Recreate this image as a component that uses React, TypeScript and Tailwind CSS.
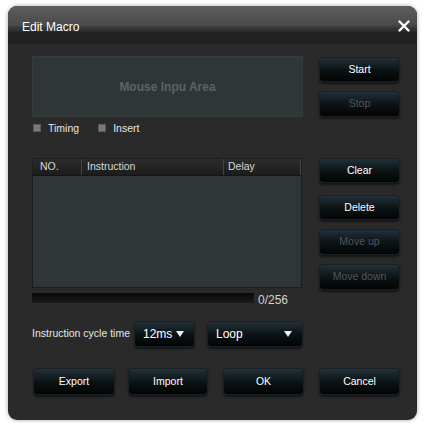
import React from 'react';

const font = { fontFamily: '"Liberation Sans", Arial, sans-serif' };

function Btn({ label, dim, className }: { label: string; dim?: boolean; className?: string }) {
  return (
    <div
      className={`flex items-center justify-center rounded-[4px] border border-[#1a1f21] bg-gradient-to-b from-[#22313a] via-[#0d1416] to-[#030505] text-[10.5px] shadow-[0_2px_2px_rgba(0,0,0,0.5)] ${
        dim ? 'text-[#4d585b]' : 'text-white'
      } ${className ?? ''}`}
    >
      {label}
    </div>
  );
}

function Dropdown({ label, className }: { label: string; className?: string }) {
  return (
    <div
      className={`flex items-center justify-between rounded-[4px] border border-[#1a1f21] bg-gradient-to-b from-[#22313a] via-[#0d1416] to-[#030505] pl-[8px] pr-[10px] shadow-[0_2px_2px_rgba(0,0,0,0.5)] ${className ?? ''}`}
    >
      <span className="text-[12px] text-white">{label}</span>
      <svg width="8" height="6" viewBox="0 0 8 6">
        <path d="M0 0 L8 0 L4 6 Z" fill="#e8eef2" />
      </svg>
    </div>
  );
}

function Check({ label }: { label: string }) {
  return (
    <div className="flex items-center gap-[7px] leading-[12px]">
      <div className="h-[8px] w-[8px] border border-[#5a5a5a] bg-[#7a7a7a]" />
      <span className="text-[10.5px] text-[#e6e6e6]">{label}</span>
    </div>
  );
}

export default function App() {
  return (
    <div className="h-[423px] w-[424px] overflow-hidden bg-white pl-[8px] pt-[6px]" style={font}>
      <div className="flex h-[414px] w-[409px] flex-col overflow-hidden rounded-[9px] bg-[#2a2a2a] shadow-[0_0_4px_rgba(0,0,0,0.35)]">
        {/* title bar */}
        <div className="flex h-[38px] items-start justify-between bg-[linear-gradient(to_bottom,#5e5e5e_0px,#4a4a4a_19px,#363636_22px,#2e2e2e_25px,#222222_27px,#222222_38px)] pl-[14px] pr-[7px] pt-[14px]">
          <span className="text-[12px] leading-[14px] text-white">Edit Macro</span>
          <svg width="12" height="12" viewBox="0 0 12 12">
            <path d="M1.5 1.5 L10.5 10.5 M10.5 1.5 L1.5 10.5" stroke="white" strokeWidth="2.4" strokeLinecap="round" />
          </svg>
        </div>

        <div className="flex flex-col pl-[24px] pr-[17px] pt-[12px]">
          {/* mouse area + start/stop */}
          <div className="flex gap-[16px]">
            <div className="flex w-[271px] flex-col">
              <div className="flex h-[61px] items-center justify-center border border-[#353c3e] bg-[#2f3638]">
                <span className="text-[12px] font-bold text-[#5b6366]">Mouse Inpu Area</span>
              </div>
              <div className="mt-[5px] flex gap-[19px] pl-[1px]">
                <Check label="Timing" />
                <Check label="Insert" />
              </div>
            </div>
            <div className="flex w-[81px] flex-col gap-[9px] pt-[1px]">
              <Btn label="Start" className="h-[25px]" />
              <Btn label="Stop" dim className="h-[26px]" />
            </div>
          </div>

          {/* list + buttons */}
          <div className="mt-[24px] flex gap-[17px]">
            <div className="flex w-[270px] flex-col">
              <div className="flex h-[130px] flex-col border border-[#1b1d1e] bg-[#2f3638]">
                <div className="flex h-[17px] items-center border-b border-[#151515] bg-gradient-to-b from-[#2c2c2c] to-[#1c1c1c] text-[10.5px] text-[#d8d8d8]">
                  <div className="flex h-full w-[49px] items-center border-r border-[#444] pl-[7px]">NO.</div>
                  <div className="flex h-full w-[142px] items-center border-r border-[#444] pl-[5px]">Instruction</div>
                  <div className="flex h-full flex-1 items-center border-r border-[#444] pl-[4px]">Delay</div>
                </div>
                <div className="flex-1" />
              </div>
              <div className="mt-[5px] flex h-[10px] items-center">
                <div className="h-[10px] w-[222px] bg-gradient-to-b from-[#0a0a0a] to-[#1a1a1a]" />
                <span className="ml-[4px] mt-[3px] text-[12px] leading-[12px] text-[#d0d0d0]">0/256</span>
              </div>
            </div>
            <div className="flex w-[81px] flex-col">
              <Btn label="Clear" className="h-[25px]" />
              <Btn label="Delete" className="mt-[12px] h-[25px]" />
              <Btn label="Move up" dim className="mt-[9px] h-[26px]" />
              <Btn label="Move down" dim className="mt-[9px] h-[26px]" />
            </div>
          </div>

          {/* cycle time row */}
          <div className="mt-[18px] flex items-center">
            <span className="w-[102px] text-[10.5px] text-[#e6e6e6]">Instruction cycle time</span>
            <Dropdown label="12ms" className="h-[26px] w-[61px]" />
            <Dropdown label="Loop" className="ml-[12px] h-[26px] w-[96px]" />
          </div>

          {/* bottom buttons */}
          <div className="mt-[21px] flex pl-[1px]">
            <Btn label="Export" className="h-[27px] w-[82px]" />
            <Btn label="Import" className="ml-[13px] h-[27px] w-[80px]" />
            <Btn label="OK" className="ml-[15px] h-[27px] w-[81px]" />
            <Btn label="Cancel" className="ml-[15px] h-[27px] w-[81px]" />
          </div>
        </div>
      </div>
    </div>
  );
}
